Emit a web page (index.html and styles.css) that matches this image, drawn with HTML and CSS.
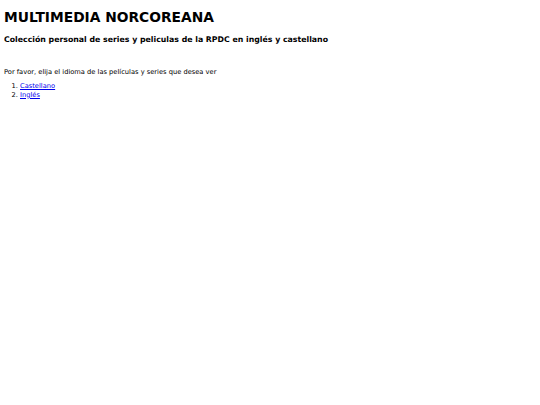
FILE: index.html
```html
<!DOCTYPE html>
<html lang="es">
<head>
<meta charset="utf-8">
<title>Multimedia Norcoreana</title>
<link rel="stylesheet" href="styles.css">
</head>
<body class="page">
<h1 class="title">MULTIMEDIA NORCOREANA</h1>
<h2 class="subtitle">Colección personal de series y peliculas de la RPDC en inglés y castellano</h2>
<p class="intro">Por favor, elija el idioma de las películas y series que desea ver</p>
<ol class="langs">
<li><a href="#">Castellano</a></li>
<li><a href="#">Inglés</a></li>
</ol>
</body>
</html>
```

FILE: styles.css
```css
.page {
  margin: 4px;
  font-family: Verdana, "DejaVu Sans", sans-serif;
  font-size: 6.7px;
  line-height: 8px;
  color: #000;
  background: #fff;
}
.title {
  font-size: 13.8px;
  line-height: 18px;
  font-weight: bold;
  margin: 4px 0 9px;
}
.subtitle {
  font-size: 7.8px;
  line-height: 10px;
  font-weight: bold;
  margin: 0 0 23px;
}
.intro {
  margin: 0 0 6px;
}
.langs {
  margin: 0;
  padding-left: 16px;
}
.langs li + li {
  margin-top: 0.5px;
}
.langs a {
  color: #00e;
}
```
